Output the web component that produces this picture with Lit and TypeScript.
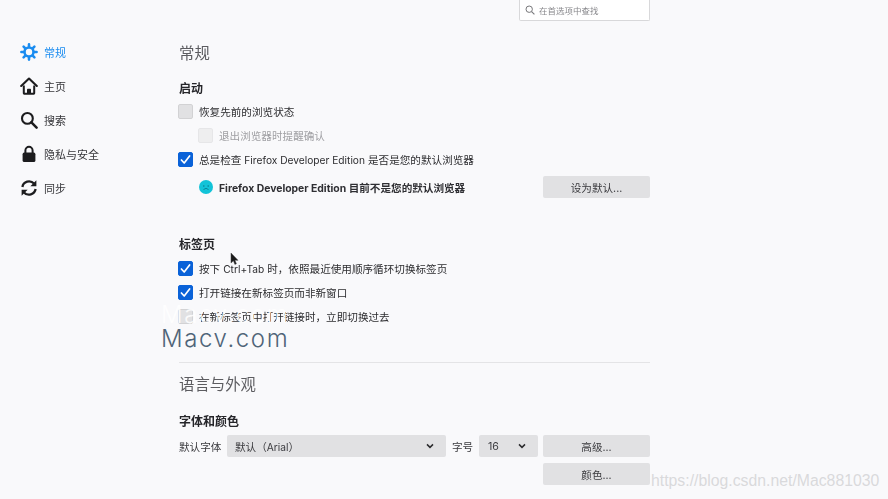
import { LitElement, html, css, svg } from "lit";
import { customElement } from "lit/decorators.js";

const gear = svg`<svg width="18" height="18" viewBox="0 0 18 18"><g stroke="#1a8cf0" stroke-width="2.6" stroke-linecap="round"><path d="M9 1.4v2.4M9 14.2v2.4M1.4 9h2.4M14.2 9h2.4M3.6 3.6l1.7 1.7M12.7 12.7l1.7 1.7M3.6 14.4l1.7-1.7M12.7 5.3l1.7-1.7"/></g><circle cx="9" cy="9" r="4.5" fill="none" stroke="#1a8cf0" stroke-width="2.6"/></svg>`;
const home = svg`<svg width="18" height="18" viewBox="0 0 18 18"><path d="M1.2 9 9 1.6 16.8 9" fill="none" stroke="#1c1c1e" stroke-width="2.1" stroke-linecap="round" stroke-linejoin="round"/><path d="M3.8 8.4V16a.8.8 0 0 0 .8.8h8.8a.8.8 0 0 0 .8-.8V8.4" fill="none" stroke="#1c1c1e" stroke-width="2"/><path d="M7 16.6v-4a.8.8 0 0 1 .8-.8h2.4a.8.8 0 0 1 .8.8v4z" fill="#1c1c1e"/></svg>`;
const search = svg`<svg width="18" height="18" viewBox="0 0 18 18"><circle cx="7.4" cy="7.4" r="5.4" fill="none" stroke="#1c1c1e" stroke-width="2.1"/><path d="m11.4 11.4 5.2 5.2" stroke="#1c1c1e" stroke-width="2.5" stroke-linecap="round"/></svg>`;
const lock = svg`<svg width="18" height="18" viewBox="0 0 18 18"><path d="M5.4 8V5.4a3.6 3.6 0 0 1 7.2 0V8" fill="none" stroke="#1c1c1e" stroke-width="2"/><rect x="2.6" y="7.6" width="12.8" height="9.4" rx="1.6" fill="#1c1c1e"/></svg>`;
const sync = svg`<svg width="18" height="18" viewBox="0 0 18 18"><g fill="none" stroke="#1c1c1e" stroke-width="2.3"><path d="M2.4 8A6.7 6.7 0 0 1 14 4.6"/><path d="M15.6 10A6.7 6.7 0 0 1 4 13.4"/></g><path d="M16.4 1.2v6h-6z" fill="#1c1c1e"/><path d="M1.6 16.8v-6h6z" fill="#1c1c1e"/></svg>`;
const smallSearch = svg`<svg width="10" height="10" viewBox="0 0 10 10"><circle cx="4.2" cy="4.2" r="3.2" fill="none" stroke="#77777a" stroke-width="1"/><path d="m6.6 6.6 2.8 2.8" stroke="#77777a" stroke-width="1.1"/></svg>`;
const check = svg`<svg width="15" height="15" viewBox="0 0 15 15"><path d="M3.4 8 6.2 11 11.6 4" fill="none" stroke="#fff" stroke-width="1.7" stroke-linecap="round" stroke-linejoin="round"/></svg>`;
const chevron = svg`<svg width="8" height="6" viewBox="0 0 8 6"><path d="M1 1.4 4 4.4 7 1.4" fill="none" stroke="#2b2b2e" stroke-width="1.5"/></svg>`;
const sad = svg`<svg width="14" height="14" viewBox="0 0 14 14"><circle cx="7" cy="7" r="7" fill="#12c3d8"/><circle cx="4.8" cy="6" r=".8" fill="#0a7f92"/><circle cx="9.2" cy="6" r=".8" fill="#0a7f92"/><path d="M4.6 10a2.6 2.6 0 0 1 4.8 0" fill="none" stroke="#0a7f92" stroke-width=".9"/></svg>`;
const cursor = svg`<svg width="9" height="14" viewBox="0 0 9 14"><path d="M1 1v10l2.4-2.2 1.5 3.6 1.5-.7-1.5-3.4H8z" fill="#1a1a1a" stroke="#444" stroke-width=".5"/></svg>`;

const NAV = [
  { icon: gear, label: "常规", active: true },
  { icon: home, label: "主页", active: false },
  { icon: search, label: "搜索", active: false },
  { icon: lock, label: "隐私与安全", active: false },
  { icon: sync, label: "同步", active: false },
];

@customElement("app-root")
export class AppRoot extends LitElement {
  static styles = css`
    :host {
      display: block;
      width: 888px;
      height: 499px;
      overflow: hidden;
      position: relative;
      background: #f9f9fb;
      color: #2c2c2f;
      font-family: "Inter", "Noto Sans CJK SC", sans-serif;
      font-size: 10.6px;
    }
    .page {
      display: grid;
      grid-template-columns: 179px 471px;
      height: 499px;
      filter: blur(0.5px);
    }
    .nav {
      display: flex;
      flex-direction: column;
      gap: 12px;
      padding: 41px 0 0 20px;
    }
    .nav-item {
      display: flex;
      align-items: center;
      gap: 6px;
      height: 22px;
      color: #36363a;
      font-size: 11px;
    }
    .nav-item span {
      position: relative;
      top: -0.5px;
    }
    .nav-item.active {
      color: #1a8cf0;
    }
    .nav-item svg {
      display: block;
    }
    .main {
      display: flex;
      flex-direction: column;
    }
    .search {
      align-self: flex-end;
      box-sizing: border-box;
      width: 131px;
      height: 21px;
      background: #fff;
      border: 1px solid #d8d8da;
      border-top: 0;
      border-radius: 0 0 2px 2px;
      display: flex;
      align-items: center;
      gap: 4px;
      padding-left: 5px;
      color: #88888c;
      font-size: 8.5px;
    }
    h1 {
      margin: 22px 0 0;
      height: 22px;
      line-height: 22px;
      font-size: 15.4px;
      font-weight: 400;
      color: #5c5c60;
    }
    h2 {
      margin: 0;
      height: 18px;
      line-height: 18px;
      font-size: 12px;
      font-weight: 700;
      color: #26262a;
    }
    .h-start { margin-top: 15px; }
    .rows {
      display: flex;
      flex-direction: column;
      gap: 8px;
      margin-top: 5px;
    }
    .rows.tabs { margin-top: 6px; }
    .row {
      display: flex;
      align-items: center;
      gap: 6px;
      height: 16px;
      white-space: nowrap;
    }
    .row.sub {
      padding-left: 20px;
      color: #a0a0a4;
    }
    .lat {
      font-size: 10.2px;
    }
    .status .lat {
      font-size: 10.4px;
    }
    .box {
      box-sizing: border-box;
      width: 15px;
      height: 15px;
      flex: none;
      margin-left: -1px;
      border-radius: 2px;
      background: #e1e1e3;
      border: 1px solid #d2d2d4;
    }
    .box.dim {
      background: #eeeeef;
      border-color: #e6e6e8;
    }
    .box.on {
      background: #0a62d8;
      border-color: #0a62d8;
    }
    .box svg {
      display: block;
      margin: -1px;
    }
    .status {
      display: flex;
      align-items: center;
      height: 22px;
      margin-top: 9px;
      padding-left: 20px;
      gap: 6px;
      font-weight: 700;
      color: #2f2f33;
    }
    .status svg { flex: none; }
    .status span.txt { flex: 1; white-space: nowrap; }
    .btn {
      box-sizing: border-box;
      width: 107px;
      height: 22px;
      flex: none;
      background: #e1e1e3;
      border-radius: 2px;
      display: flex;
      align-items: center;
      justify-content: center;
      color: #3a3a3e;
      font-size: 10.6px;
      font-weight: 400;
    }
    .h-tabs { margin-top: 38px; }
    hr {
      border: 0;
      height: 1px;
      width: 100%;
      margin: 38px 0 0;
      background: #e4e4e6;
    }
    .h-lang { margin-top: 11px; }
    .h-font { margin-top: 17px; }
    .font-row {
      display: flex;
      align-items: center;
      height: 22px;
      margin-top: 4px;
      white-space: nowrap;
    }
    .lbl {
      color: #3a3a3e;
      flex: none;
      width: 42px;
    }
    .select {
      box-sizing: border-box;
      height: 22px;
      flex: none;
      background: #e1e1e3;
      border-radius: 2px;
      display: flex;
      align-items: center;
      justify-content: space-between;
      padding: 0 12px 0 8px;
      color: #3a3a3e;
    }
    .select.font { width: 219px; margin-left: 6px; }
    .select.size { width: 59px; margin-left: 6px; padding-left: 9px; }
    .lbl.size { margin-left: 6px; width: 21px; }
    .font-row .btn { margin-left: 5px; }
    .second {
      display: flex;
      justify-content: flex-end;
      margin-top: 6px;
    }
    .mark {
      position: absolute;
      left: 161px;
      font-family: "Inter", sans-serif;
      font-size: 24px;
      font-weight: 300;
      line-height: 28px;
      letter-spacing: 1.6px;
      white-space: nowrap;
    }
    .mark.blue { top: 325px; color: #4f6478; }
    .mark.white { top: 301px; color: rgba(255, 255, 255, 0.85); }
    .csdn {
      position: absolute;
      left: 651px;
      top: 472px;
      font-family: "Liberation Sans", sans-serif;
      font-size: 15.8px;
      line-height: 18px;
      color: #d9d9dc;
      white-space: nowrap;
    }
    .cursor {
      position: absolute;
      left: 230px;
      top: 252px;
      display: block;
    }
  `;

  private row(label: unknown, state: "on" | "off" | "dim" = "off", sub = false) {
    const cls = state === "on" ? "box on" : state === "dim" ? "box dim" : "box";
    return html`<div class="row ${sub ? "sub" : ""}">
      <div class=${cls}>${state === "on" ? check : ""}</div>
      <span>${label}</span>
    </div>`;
  }

  render() {
    return html`
      <div class="page">
        <nav class="nav">
          ${NAV.map(
            (n) => html`<div class="nav-item ${n.active ? "active" : ""}">
              ${n.icon}<span>${n.label}</span>
            </div>`
          )}
        </nav>
        <main class="main">
          <div class="search">${smallSearch}<span>在首选项中查找</span></div>
          <h1>常规</h1>
          <h2 class="h-start">启动</h2>
          <div class="rows">
            ${this.row("恢复先前的浏览状态")}
            ${this.row("退出浏览器时提醒确认", "dim", true)}
            ${this.row(html`总是检查 <span class="lat">Firefox Developer Edition</span> 是否是您的默认浏览器`, "on")}
          </div>
          <div class="status">
            ${sad}<span class="txt"><span class="lat">Firefox Developer Edition</span> 目前不是您的默认浏览器</span>
            <div class="btn">设为默认...</div>
          </div>
          <h2 class="h-tabs">标签页</h2>
          <div class="rows tabs">
            ${this.row(html`按下 <span class="lat">Ctrl+Tab</span> 时，依照最近使用顺序循环切换标签页`, "on")}
            ${this.row("打开链接在新标签页而非新窗口", "on")}
            ${this.row("在新标签页中打开链接时，立即切换过去")}
          </div>
          <hr />
          <h1 class="h-lang">语言与外观</h1>
          <h2 class="h-font">字体和颜色</h2>
          <div class="font-row">
            <span class="lbl">默认字体</span>
            <div class="select font"><span>默认（<span class="lat">Arial</span>）</span>${chevron}</div>
            <span class="lbl size">字号</span>
            <div class="select size"><span>16</span>${chevron}</div>
            <div class="btn">高级...</div>
          </div>
          <div class="second"><div class="btn">颜色...</div></div>
        </main>
      </div>
      <div class="mark white">Macv.com</div>
      <div class="mark blue">Macv.com</div>
      <div class="csdn">https://blog.csdn.net/Mac881030</div>
      <div class="cursor">${cursor}</div>
    `;
  }
}
